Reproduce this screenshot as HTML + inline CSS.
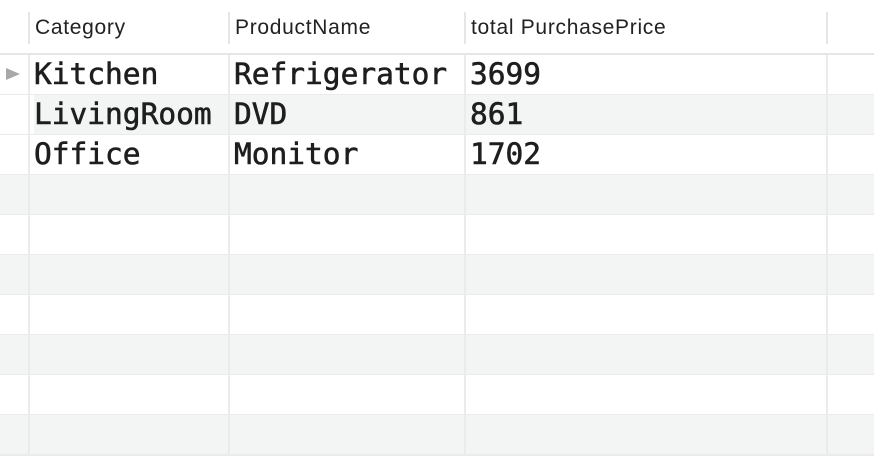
<!DOCTYPE html>
<html><head><style>
body{margin:0;width:874px;height:456px;background:#fff;position:relative;overflow:hidden}
.a{position:absolute}
.h{font-family:"Liberation Sans",sans-serif;font-size:21px;letter-spacing:0.7px;color:#222;top:16px}
.m{font-family:"DejaVu Sans Mono",monospace;font-size:29.5px;color:#1e1e1e;line-height:40px;-webkit-text-stroke:0.6px #1e1e1e}
</style></head><body>
<div class="a" style="left:0;top:174px;width:874px;height:40px;background:#f3f4f4"></div>
<div class="a" style="left:0;top:254px;width:874px;height:40px;background:#f3f4f4"></div>
<div class="a" style="left:0;top:334px;width:874px;height:40px;background:#f3f4f4"></div>
<div class="a" style="left:0;top:414px;width:874px;height:40px;background:#f3f4f4"></div>
<div class="a" style="left:34px;top:94px;width:840px;height:40px;background:#f3f4f4"></div>
<div class="a" style="left:0;top:53px;width:874px;height:2px;background:#e6e6e6"></div>
<div class="a" style="left:0;top:94px;width:874px;height:1px;background:#ebebeb"></div>
<div class="a" style="left:0;top:134px;width:874px;height:1px;background:#ebebeb"></div>
<div class="a" style="left:0;top:174px;width:874px;height:1px;background:#ebebeb"></div>
<div class="a" style="left:0;top:214px;width:874px;height:1px;background:#ebebeb"></div>
<div class="a" style="left:0;top:254px;width:874px;height:1px;background:#ebebeb"></div>
<div class="a" style="left:0;top:294px;width:874px;height:1px;background:#ebebeb"></div>
<div class="a" style="left:0;top:334px;width:874px;height:1px;background:#ebebeb"></div>
<div class="a" style="left:0;top:374px;width:874px;height:1px;background:#ebebeb"></div>
<div class="a" style="left:0;top:414px;width:874px;height:1px;background:#ebebeb"></div>
<div class="a" style="left:0;top:454px;width:874px;height:2px;background:#ebebeb"></div>
<div class="a" style="left:28px;top:12px;width:2px;height:32px;background:#e6e6e6"></div>
<div class="a" style="left:228px;top:12px;width:2px;height:32px;background:#e6e6e6"></div>
<div class="a" style="left:464px;top:12px;width:2px;height:32px;background:#e6e6e6"></div>
<div class="a" style="left:826px;top:12px;width:2px;height:32px;background:#e6e6e6"></div>
<div class="a" style="left:28px;top:55px;width:2px;height:401px;background:#ebebeb"></div>
<div class="a" style="left:228px;top:55px;width:2px;height:401px;background:#ebebeb"></div>
<div class="a" style="left:464px;top:55px;width:2px;height:401px;background:#ebebeb"></div>
<div class="a" style="left:826px;top:55px;width:2px;height:401px;background:#ebebeb"></div>
<div class="a h" style="left:35px">Category</div>
<div class="a h" style="left:235px">ProductName</div>
<div class="a h" style="left:471px">total PurchasePrice</div>
<svg class="a" style="left:5px;top:67px" width="16" height="14"><path d="M1 1L15 7L1 13Z" fill="#a8a8a8"/></svg>
<div class="a m" style="left:34px;top:54px">Kitchen</div>
<div class="a m" style="left:234px;top:54px">Refrigerator</div>
<div class="a m" style="left:470px;top:54px">3699</div>
<div class="a m" style="left:34px;top:94px">LivingRoom</div>
<div class="a m" style="left:234px;top:94px">DVD</div>
<div class="a m" style="left:470px;top:94px">861</div>
<div class="a m" style="left:34px;top:134px">Office</div>
<div class="a m" style="left:234px;top:134px">Monitor</div>
<div class="a m" style="left:470px;top:134px">1702</div>
</body></html>
